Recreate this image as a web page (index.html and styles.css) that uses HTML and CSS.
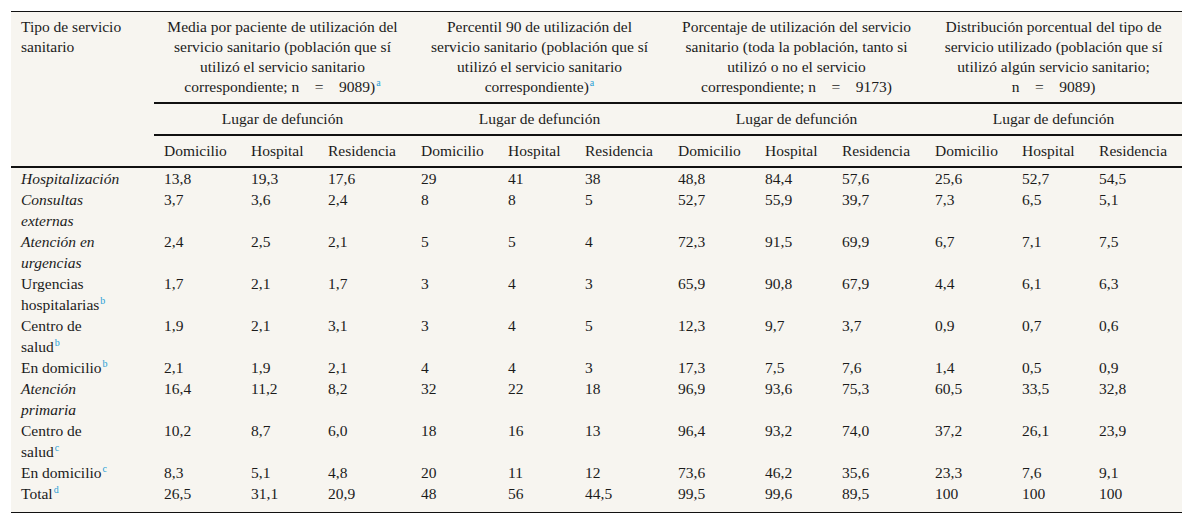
FILE: index.html
```
<!DOCTYPE html>
<html lang="es">
<head>
<meta charset="utf-8">
<title>Tabla</title>
<link rel="stylesheet" href="styles.css">
</head>
<body>
<table class="tbl">
  <colgroup>
    <col class="c-first">
    <col class="c-dom"><col class="c-hos"><col class="c-res">
    <col class="c-dom"><col class="c-hos"><col class="c-res">
    <col class="c-dom"><col class="c-hos"><col class="c-res">
    <col class="c-dom"><col class="c-hos"><col class="c-res">
  </colgroup>
  <thead>
    <tr class="h1">
      <th rowspan="3" class="first">Tipo de servicio sanitario</th>
      <th colspan="3" class="grp">Media por paciente de utilización del servicio sanitario (población que sí utilizó el servicio sanitario correspondiente; n&nbsp;&nbsp;&nbsp;&nbsp;=&nbsp;&nbsp;&nbsp;&nbsp;9089)<sup>a</sup></th>
      <th colspan="3" class="grp">Percentil 90 de utilización del servicio sanitario (población que sí utilizó el servicio sanitario correspondiente)<sup>a</sup></th>
      <th colspan="3" class="grp">Porcentaje de utilización del servicio sanitario (toda la población, tanto si utilizó o no el servicio correspondiente; n&nbsp;&nbsp;&nbsp;&nbsp;=&nbsp;&nbsp;&nbsp;&nbsp;9173)</th>
      <th colspan="3" class="grp">Distribución porcentual del tipo de servicio utilizado (población que sí utilizó algún servicio sanitario; n&nbsp;&nbsp;&nbsp;&nbsp;=&nbsp;&nbsp;&nbsp;&nbsp;9089)</th>
    </tr>
    <tr class="h2">
      <th colspan="3" class="grp">Lugar de defunción</th>
      <th colspan="3" class="grp">Lugar de defunción</th>
      <th colspan="3" class="grp">Lugar de defunción</th>
      <th colspan="3" class="grp">Lugar de defunción</th>
    </tr>
    <tr class="h3">
      <th>Domicilio</th><th>Hospital</th><th>Residencia</th>
      <th>Domicilio</th><th>Hospital</th><th>Residencia</th>
      <th>Domicilio</th><th>Hospital</th><th>Residencia</th>
      <th>Domicilio</th><th>Hospital</th><th>Residencia</th>
    </tr>
  </thead>
  <tbody>
    <tr><td class="lbl it">Hospitalización</td><td>13,8</td><td>19,3</td><td>17,6</td><td>29</td><td>41</td><td>38</td><td>48,8</td><td>84,4</td><td>57,6</td><td>25,6</td><td>52,7</td><td>54,5</td></tr>
    <tr><td class="lbl it">Consultas externas</td><td>3,7</td><td>3,6</td><td>2,4</td><td>8</td><td>8</td><td>5</td><td>52,7</td><td>55,9</td><td>39,7</td><td>7,3</td><td>6,5</td><td>5,1</td></tr>
    <tr><td class="lbl it">Atención en urgencias</td><td>2,4</td><td>2,5</td><td>2,1</td><td>5</td><td>5</td><td>4</td><td>72,3</td><td>91,5</td><td>69,9</td><td>6,7</td><td>7,1</td><td>7,5</td></tr>
    <tr><td class="lbl">Urgencias hospitalarias<sup>b</sup></td><td>1,7</td><td>2,1</td><td>1,7</td><td>3</td><td>4</td><td>3</td><td>65,9</td><td>90,8</td><td>67,9</td><td>4,4</td><td>6,1</td><td>6,3</td></tr>
    <tr><td class="lbl">Centro de salud<sup>b</sup></td><td>1,9</td><td>2,1</td><td>3,1</td><td>3</td><td>4</td><td>5</td><td>12,3</td><td>9,7</td><td>3,7</td><td>0,9</td><td>0,7</td><td>0,6</td></tr>
    <tr><td class="lbl">En domicilio<sup>b</sup></td><td>2,1</td><td>1,9</td><td>2,1</td><td>4</td><td>4</td><td>3</td><td>17,3</td><td>7,5</td><td>7,6</td><td>1,4</td><td>0,5</td><td>0,9</td></tr>
    <tr><td class="lbl it">Atención primaria</td><td>16,4</td><td>11,2</td><td>8,2</td><td>32</td><td>22</td><td>18</td><td>96,9</td><td>93,6</td><td>75,3</td><td>60,5</td><td>33,5</td><td>32,8</td></tr>
    <tr><td class="lbl">Centro de salud<sup>c</sup></td><td>10,2</td><td>8,7</td><td>6,0</td><td>18</td><td>16</td><td>13</td><td>96,4</td><td>93,2</td><td>74,0</td><td>37,2</td><td>26,1</td><td>23,9</td></tr>
    <tr><td class="lbl">En domicilio<sup>c</sup></td><td>8,3</td><td>5,1</td><td>4,8</td><td>20</td><td>11</td><td>12</td><td>73,6</td><td>46,2</td><td>35,6</td><td>23,3</td><td>7,6</td><td>9,1</td></tr>
    <tr class="last"><td class="lbl">Total<sup>d</sup></td><td>26,5</td><td>31,1</td><td>20,9</td><td>48</td><td>56</td><td>44,5</td><td>99,5</td><td>99,6</td><td>89,5</td><td>100</td><td>100</td><td>100</td></tr>
  </tbody>
</table>
</body>
</html>
```
FILE: styles.css
```
html, body {
  margin: 0;
  padding: 0;
  background: #ffffff;
}
body {
  padding: 11px 0 0 11px;
  font-family: "Liberation Serif", Tinos, "Times New Roman", serif;
  font-size: 15.5px;
  color: #1b1b1b;
}
.tbl {
  border-collapse: collapse;
  table-layout: fixed;
  width: 1171px;
  background: #f7f5f0;
  border-top: 1px solid #111;
  border-bottom: 1px solid #111;
}
.tbl th,
.tbl td {
  font-family: "Liberation Serif", Tinos, "Times New Roman", serif;
  font-size: 15.5px;
}
.c-first { width: 143px; }
.c-dom { width: 87px; }
.c-hos { width: 77px; }
.c-res { width: 93px; }
.tbl th {
  font-weight: normal;
  text-align: left;
  vertical-align: top;
  line-height: 20px;
  padding: 5px 10px;
}
.tbl th.grp {
  text-align: center;
  border-bottom: 2px solid #111;
}
.tbl th.first {
  padding-right: 31px;
  border-bottom: 2px solid #111;
}
.tbl .h3 th {
  border-bottom: 2px solid #111;
}
.tbl td {
  line-height: 21px;
  padding: 0 10px;
  vertical-align: top;
  text-align: left;
}
.tbl td.lbl {
  padding-right: 31px;
}
.tbl .last td {
  padding-bottom: 8px;
}
.tbl td.it {
  font-style: italic;
}
.tbl sup {
  color: #2a9fd6;
  font-size: 10px;
  line-height: 0;
  vertical-align: 6px;
  margin-left: 1px;
}
```
